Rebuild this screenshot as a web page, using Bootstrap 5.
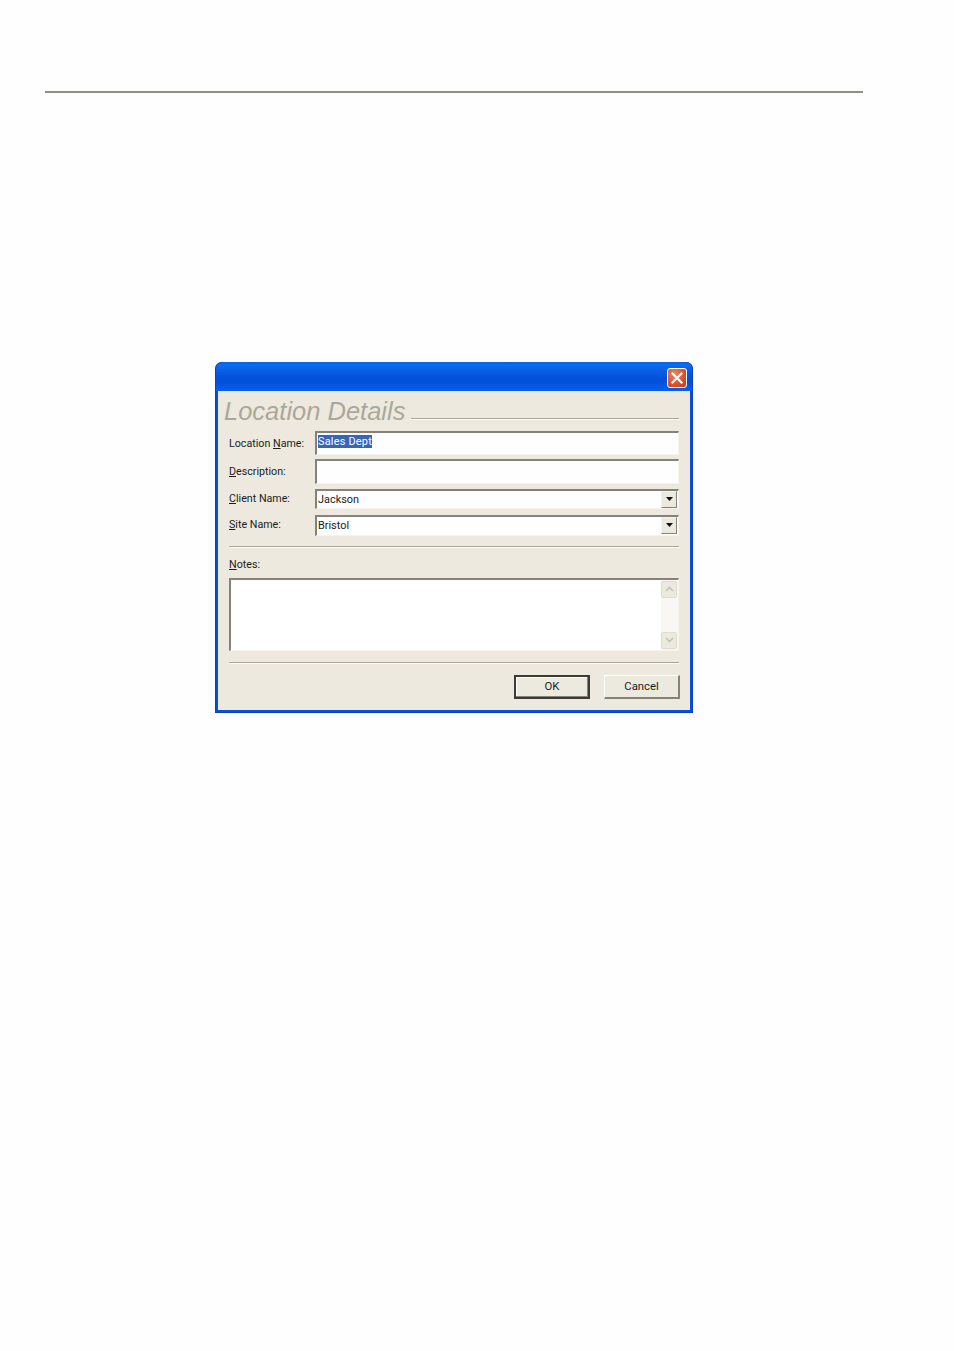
<!DOCTYPE html>
<html lang="en">
<head>
<meta charset="utf-8">
<title>Location Details</title>
<link href="https://cdn.jsdelivr.net/npm/bootstrap@5.3.0/dist/css/bootstrap.min.css" rel="stylesheet">
<style>
html,body{background:#fefefe;margin:0;height:1351px;overflow:hidden}
body{font-family:Roboto,"Liberation Sans",Arial,sans-serif;font-size:10.7px;line-height:14px;color:#1a1a1a}
.top-rule{height:2px;width:818px;margin:91px 0 0 45px;background:#8f8f88}
.xp-win{width:478px;height:351px;margin:269px 0 0 215px;background:#0a4fdc;border-radius:7px 7px 0 0;padding:0 3px 3px;box-shadow:inset 0 0 0 1px #0a3fc4}
.xp-title{height:29px;padding:6px 5px 0 0;background:linear-gradient(#0a62e6 0,#0a6cf0 10%,#0453dc 50%,#0350da 70%,#0660ec 100%);margin:0 -2px;border-radius:7px 7px 0 0}
.xp-close{width:20px;height:20px;border:1px solid #fff;border-radius:3px;background:radial-gradient(circle at 35% 30%,#e98668,#d9512c 60%,#c23c1a);padding:0}
.xp-close svg{display:block;width:18px;height:18px}
.xp-client{height:319px;background:#ede9df;padding:5px 11px 0 6px;color:#1c1c1c}
.xp-head{height:35px}
.xp-head-text{font-family:"Liberation Sans",Arial,sans-serif;font-size:25.5px;line-height:30px;font-style:italic;color:#aca899;white-space:nowrap}
.xp-head-line{height:1px;background:#aca899;margin:22px 0 0 6px;box-shadow:0 1px 0 #fff}
.xp-row{padding-left:5px}
.xp-label{width:86px;flex:none;padding-top:6px}
.xp-label u{text-underline-offset:1px}
.xp-label.xp-label-tight{padding-top:3px}
.xp-field{flex:1;background:#fefefe;font-size:10.9px;border-style:solid;border-width:2px 1px 1px 2px;border-color:#85827a #f5f3ec #f5f3ec #85827a;padding:0 1px;white-space:nowrap;overflow:hidden}
.xp-h24{height:24px;margin-bottom:4px}
.xp-h25{height:25px;margin-bottom:5px}
.xp-h20{height:20px;margin-bottom:6px}
.xp-h21{height:21px}
.xp-sel{background:#3566b8;color:#fff;padding:0;letter-spacing:.22px}
.xp-field-text{padding-top:2px}
.xp-arrow{width:16px;height:17px;flex:none;background:#ece9df;border:1px solid #85827a;border-top-color:#f5f3ec;border-left-color:#f5f3ec;margin-left:auto}
.xp-arrow svg{display:block;margin:5px auto 0}
.xp-sep{height:1px;background:#aca899;box-shadow:0 1px 0 #fff;margin:11px 0 0 5px}
.xp-sep.xp-sep-first{margin-top:10px}
.xp-notes-label{padding:11px 0 6px 5px}
.xp-notes{height:73px;margin-left:5px;background:#fff;border-style:solid;border-width:2px 1px 1px 2px;border-color:#85827a #f5f3ec #f5f3ec #85827a}
.xp-scroll{width:17px;height:100%;margin-left:auto;background:#f8f7f3;padding:1px 1px 1px 0}
.xp-scroll-btn{height:17px;width:16px;background:#ece9df;border:1px solid #dfdccf;border-radius:2px}
.xp-scroll-btn svg{display:block;margin:4px auto 0}
.xp-btn{width:76px;height:24px;background:#ece9df;font-size:11.3px;line-height:14px;color:#1c1c1c;border-style:solid;border-width:1px 2px 2px 1px;border-color:#fff #85827a #85827a #fff;padding:0}
.xp-btn.xp-default{border:2px solid #3a3a36;box-shadow:inset -1px -1px 0 #85827a,inset 1px 1px 0 #fff}
.xp-foot{padding-top:12px;margin-right:-1px;gap:14px}
</style>
</head>
<body>
<div class="top-rule"></div>
<div class="xp-win">
  <div class="xp-title d-flex justify-content-end">
    <button class="xp-close" type="button" aria-label="Close"><svg viewBox="0 0 18 18"><path d="M4.5 4.5 13.5 13.5M13.5 4.5 4.5 13.5" stroke="#fff" stroke-width="2.2" stroke-linecap="square" fill="none"/></svg></button>
  </div>
  <div class="xp-client">
    <div class="xp-head d-flex align-items-start">
      <div class="xp-head-text">Location Details</div>
      <div class="xp-head-line flex-grow-1"></div>
    </div>
    <div class="xp-row d-flex xp-h24">
      <div class="xp-label">Location <u>N</u>ame:</div>
      <div class="xp-field"><div class="xp-field-text"><span class="xp-sel">Sales Dept</span></div></div>
    </div>
    <div class="xp-row d-flex xp-h25">
      <div class="xp-label"><u>D</u>escription:</div>
      <div class="xp-field"></div>
    </div>
    <div class="xp-row d-flex xp-h20">
      <div class="xp-label xp-label-tight"><u>C</u>lient Name:</div>
      <div class="xp-field d-flex"><div class="xp-field-text">Jackson</div>
        <div class="xp-arrow"><svg width="7" height="4" viewBox="0 0 7 4"><path d="M0 0H7L3.5 4Z" fill="#111"/></svg></div>
      </div>
    </div>
    <div class="xp-row d-flex xp-h21">
      <div class="xp-label xp-label-tight"><u>S</u>ite Name:</div>
      <div class="xp-field d-flex"><div class="xp-field-text">Bristol</div>
        <div class="xp-arrow"><svg width="7" height="4" viewBox="0 0 7 4"><path d="M0 0H7L3.5 4Z" fill="#111"/></svg></div>
      </div>
    </div>
    <div class="xp-sep xp-sep-first"></div>
    <div class="xp-notes-label"><u>N</u>otes:</div>
    <div class="xp-notes">
      <div class="xp-scroll d-flex flex-column justify-content-between">
        <div class="xp-scroll-btn"><svg width="9" height="6" viewBox="0 0 9 6"><path d="M1 5 4.5 1.5 8 5" stroke="#c4c2b8" stroke-width="1.6" fill="none"/></svg></div>
        <div class="xp-scroll-btn"><svg width="9" height="6" viewBox="0 0 9 6"><path d="M1 1 4.5 4.5 8 1" stroke="#c4c2b8" stroke-width="1.6" fill="none"/></svg></div>
      </div>
    </div>
    <div class="xp-sep"></div>
    <div class="xp-foot d-flex justify-content-end">
      <button class="xp-btn xp-default" type="button">OK</button>
      <button class="xp-btn" type="button">Cancel</button>
    </div>
  </div>
</div>
<script src="https://cdn.jsdelivr.net/npm/bootstrap@5.3.0/dist/js/bootstrap.bundle.min.js"></script>
</body>
</html>
